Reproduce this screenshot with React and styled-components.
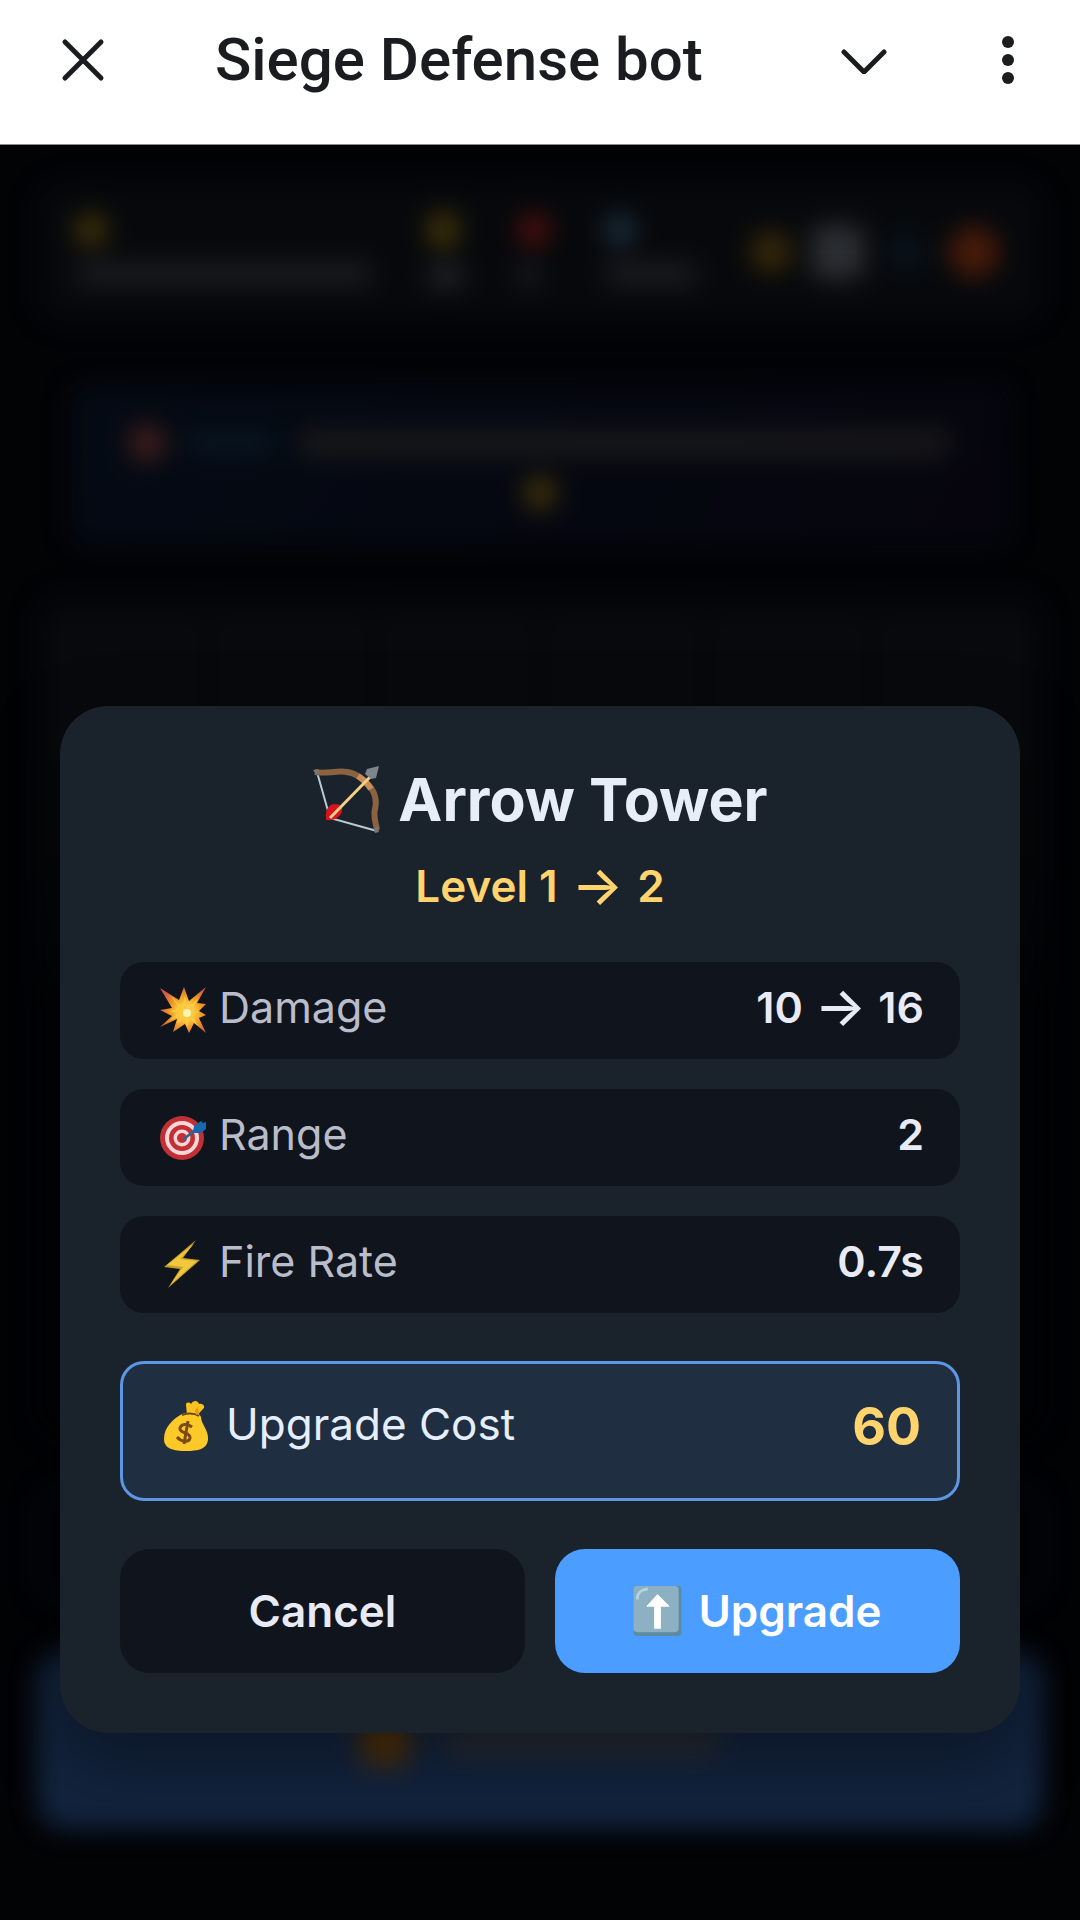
import React from "react";
import styled, { createGlobalStyle } from "styled-components";

const ui = '"Inter", "Noto Sans", sans-serif';

const GlobalStyle = createGlobalStyle`
  * { box-sizing: border-box; }
  body { margin: 0; background: #020305; font-family: ${ui}; }
  button { font-family: inherit; border: 0; padding: 0; cursor: pointer; }
  svg { display: block; flex: none; }
`;

const Page = styled.div`
  min-height: 100vh;
  display: flex;
  flex-direction: column;
  background: #020305;
`;

const TitleBar = styled.header`
  display: flex;
  align-items: flex-start;
  height: 145px;
  padding: 30px 41px 0 52px;
  background: #fff;
  color: #1b1c20;
  border-bottom: 1px solid #8a8b8c;
`;

const BarTitle = styled.h1`
  flex: 1;
  margin: 0 0 0 101px;
  font: 500 60px/60px "Roboto", sans-serif;
  color: #1b1c20;
  white-space: nowrap;
`;

const BarButton = styled.button`
  display: grid;
  place-items: center;
  width: 62px;
  height: 60px;
  margin-left: ${(p) => p.$gap || 0}px;
  background: none;
  color: inherit;
`;

const Stage = styled.main`
  flex: 1;
  display: grid;
  > * { grid-area: 1 / 1; min-width: 0; }
`;

const Game = styled.div`
  display: flex;
  flex-direction: column;
  gap: 50px;
  padding: 36px 36px 90px;
  overflow: hidden;
  filter: blur(12px);
`;

const Hud = styled.div`
  display: flex;
  align-items: center;
  justify-content: space-between;
  height: 142px;
  padding: 0 44px 0 38px;
  border-radius: 30px;
  background: #06080b;
`;

const Blob = styled.span`
  display: block;
  flex: none;
  width: ${(p) => p.$w || 34}px;
  height: ${(p) => p.$h || 34}px;
  border-radius: ${(p) => p.$r || 17}px;
  background: ${(p) => p.$c};
`;

const HudStat = styled.div`
  display: flex;
  flex-direction: column;
  gap: 14px;
  padding-bottom: 4px;
`;

const HudIcons = styled.div`
  display: flex;
  align-items: center;
  gap: 20px;
`;

const Notice = styled.div`
  display: flex;
  flex-direction: column;
  align-items: center;
  gap: 14px;
  height: 160px;
  margin: 12px 34px 0;
  padding: 36px 20px 0;
  border-radius: 18px;
  border: 3px solid #070a1b;
  background: linear-gradient(120deg, #040a14, #06050d);
`;

const NoticeLine = styled.div`
  display: flex;
  align-items: center;
  justify-content: center;
  gap: 20px;
`;

const Board = styled.div`
  flex: 1;
  display: grid;
  grid-template-columns: repeat(6, 1fr);
  grid-auto-rows: 150px;
  gap: 12px;
  padding: 20px 12px;
  border-radius: 30px;
  background: linear-gradient(#050709 0 30%, #020305 50%);
`;

const Tile = styled.span`
  border-radius: 18px;
  background: #07090c;
`;

const TowerBar = styled.div`
  height: 112px;
  border-radius: 24px;
  border: 6px solid #070b18;
`;

const StartWave = styled.div`
  display: flex;
  align-items: center;
  justify-content: center;
  gap: 30px;
  height: 180px;
  border-radius: 30px;
  background: #12233d;
`;

const Center = styled.div`
  position: relative;
  display: grid;
  align-content: end;
  padding: 0 60px 187px;
`;

const Dialog = styled.section`
  display: flex;
  flex-direction: column;
  padding: 60px;
  border-radius: 48px;
  background: #1a222c;
  box-shadow: 0 24px 72px rgba(0, 0, 0, 0.4);
`;

const Heading = styled.h2`
  display: flex;
  align-items: center;
  justify-content: center;
  gap: 18px;
  margin: 0;
  font-size: 59px;
  line-height: 68px;
  font-weight: 700;
  color: #e8eef8;
`;

const Level = styled.p`
  display: flex;
  align-items: center;
  justify-content: center;
  gap: 14px;
  margin: 24px 0 48px;
  font-size: 44px;
  line-height: 56px;
  font-weight: 600;
  color: #ffd36e;
`;

const Arrow = styled.span`
  font-size: 54px;
  line-height: 56px;
  font-weight: 500;
`;

const Stats = styled.dl`
  display: flex;
  flex-direction: column;
  gap: 30px;
  margin: 0;
`;

const Row = styled.div`
  display: flex;
  align-items: center;
  justify-content: space-between;
  height: 97px;
  padding: 0 36px 2px 39px;
  border-radius: 24px;
  background: #10141d;
`;

const CostRow = styled(Row)`
  height: 140px;
  margin: 18px 0 48px;
  padding-bottom: 8px;
  border: 3px solid #5d97e4;
  background: #1f2e41;
`;

const Name = styled.dt`
  display: flex;
  align-items: center;
  gap: ${(p) => (p.$cost ? 16 : 12)}px;
  font-size: ${(p) => (p.$cost ? 44 : 43)}px;
  line-height: 60px;
  color: ${(p) => (p.$cost ? "#e6eefc" : "#b9bdc9")};
`;

const Label = styled.span`
  padding-bottom: 6px;
`;

const Value = styled.dd`
  display: flex;
  align-items: center;
  gap: 12px;
  margin: 0;
  padding-bottom: ${(p) => (p.$cost ? 0 : 6)}px;
  font-size: ${(p) => (p.$cost ? 52 : 43)}px;
  line-height: 60px;
  font-weight: ${(p) => (p.$cost ? 700 : 600)};
  color: ${(p) => (p.$cost ? "#ffd36e" : "#e8ebf6")};
`;

const Actions = styled.div`
  display: grid;
  grid-template-columns: 1fr 1fr;
  gap: 30px;
`;

const Action = styled.button`
  display: flex;
  align-items: center;
  justify-content: center;
  gap: 16px;
  height: 124px;
  border-radius: 30px;
  font-size: 44px;
  line-height: 60px;
  font-weight: 600;
  color: ${(p) => (p.$primary ? "#fff" : "#e8ebf6")};
  background: ${(p) => (p.$primary ? "#4b9dff" : "#10141d")};
`;

const Bow = () => (
  <svg width="68" height="68" viewBox="0 0 68 68" fill="none" aria-hidden="true">
    <path d="M5 6 18 52 65 65" stroke="#b9cbd6" strokeWidth="2" />
    <path d="M14 52c-1-8 3-14 9-14 6 0 8 3 7 7-1 6-8 10-16 9Z" fill="#d7131d" />
    <path d="M3 6c13 3 29-5 43 4 14 9 20 20 17 33-2 8 1 14 2 21" stroke="#8b6341" strokeWidth="6" />
    <path d="M46 10c6 4 10 8 13 13" stroke="#c98e5b" strokeWidth="6" />
    <path d="M18 52 59 10" stroke="#f6cf86" strokeWidth="3" />
    <path d="m67 0-3 12-5 1-6-5 2-5Z" fill="#7c858b" />
    <path d="m1 4 5-1 2 4-4 2ZM62 62l4-1 1 5-4 1Z" fill="#79746f" />
  </svg>
);

const Burst = () => (
  <svg width="48" height="48" viewBox="0 0 48 48" aria-hidden="true">
    <defs>
      <radialGradient id="burst" cx="27" cy="26" r="27" gradientUnits="userSpaceOnUse">
        <stop offset="0" stopColor="#fff6a8" />
        <stop offset=".3" stopColor="#fbc94a" />
        <stop offset=".6" stopColor="#f19a20" />
        <stop offset="1" stopColor="#cf5a4a" />
      </radialGradient>
    </defs>
    <path fill="url(#burst)" d="M1 2 20 14 25 1l5 14L47 1 38 17l9 1-7 7 7 4-7 3 7 15-12-10-5 10-4-9-12 8 4-13L1 41l12-11L1 24l12-2Z" />
    <path fill="#fdc93f" d="m12 10 11 11 3-11 3 12 10-10-6 12 7 2-7 3 6 11-8-7-3 8-3-8-7 5 3-8-10 4 8-7-8-2 9-3Z" />
    <circle cx="28" cy="27" r="4" fill="#fff4b4" />
  </svg>
);

const Target = () => (
  <svg width="48" height="48" viewBox="0 0 48 48" aria-hidden="true">
    <circle cx="23" cy="25" r="22" fill="#c03034" />
    <circle cx="23" cy="25" r="17" fill="#fbd5d8" />
    <circle cx="23" cy="25" r="13" fill="#c03034" />
    <circle cx="23" cy="25" r="8.500" fill="#fbd5d8" />
    <circle cx="23" cy="25" r="5" fill="#c03034" />
    <path d="m24 27 14-12" stroke="#33658e" strokeWidth="2.500" />
    <path d="m35 13 7-5 2 2 3-1v7l-5 4-8 0Z" fill="#1769ad" />
  </svg>
);

const Bolt = () => (
  <svg width="48" height="48" viewBox="0 0 48 48" aria-hidden="true">
    <path fill="#c99f27" d="M37 0 5 27l16 2L9 48l32-28-17-2Z" />
    <path fill="#f0c83c" d="M35 4 8 25l16 2-12 17 26-23-17-2Z" />
  </svg>
);

const Money = () => (
  <svg width="48" height="52" viewBox="0 0 48 52" aria-hidden="true">
    <path fill="#fcc21f" d="m25 14-1-10c0-3 3-3 5-1 2-4 7-4 8 0 4-1 7 3 4 5-3 3-4 4-5 7Z" />
    <path fill="#fdc928" d="M20 13c8-3 17-2 19 3 0 7 8 13 7 23-1 9-10 11-22 11S2 48 2 38c0-12 9-20 18-25Z" />
    <path d="M20 14c6-2 12-2 17 1" stroke="#6b4710" strokeWidth="2" fill="none" />
    <path d="M30 26c-5-4-11-3-12 1-1 6 11 4 10 10-1 5-9 4-13-1M26 20l-4 23" stroke="#7b4c12" strokeWidth="3" fill="none" />
    <path fill="#e69b14" d="m33 9 3-3 1 6-3 2Z" />
  </svg>
);

const UpArrow = () => (
  <svg width="49" height="50" viewBox="0 0 50 52" aria-hidden="true">
    <rect width="50" height="52" rx="4" fill="#5c8ba3" />
    <rect width="47" height="48" rx="4" fill="#8db1c3" />
    <path d="M4 14C4 7 7 4 15 3" stroke="#b6d4e0" strokeWidth="3" fill="none" />
    <path d="M25 9 14 21h8v23h6V21h9Z" fill="#fff" stroke="#fff" strokeWidth="1" strokeLinejoin="round" />
  </svg>
);

const stats = [
  ["Damage", <><span>10</span><Arrow>→</Arrow><span>16</span></>, Burst],
  ["Range", "2", Target],
  ["Fire Rate", "0.7s", Bolt],
];

export default function App() {
  return (
    <>
      <GlobalStyle />
      <Page>
        <TitleBar>
          <BarButton aria-label="Close">
            <svg width="44" height="44" viewBox="0 0 44 44" fill="none" stroke="currentColor" strokeWidth="5" strokeLinecap="round">
              <path d="m4 4 36 36M40 4 4 40" />
            </svg>
          </BarButton>
          <BarTitle>Siege Defense bot</BarTitle>
          <BarButton aria-label="Collapse">
            <svg width="48" height="28" viewBox="0 0 48 28" fill="none" stroke="currentColor" strokeWidth="5" strokeLinecap="round" strokeLinejoin="round">
              <path d="m4 6 20 20L44 6" />
            </svg>
          </BarButton>
          <BarButton aria-label="More options" $gap={82}>
            <svg width="12" height="48" viewBox="0 0 12 48" fill="currentColor">
              <circle cx="6" cy="6" r="6" />
              <circle cx="6" cy="24" r="6" />
              <circle cx="6" cy="42" r="6" />
            </svg>
          </BarButton>
        </TitleBar>
        <Stage>
          <Game aria-hidden="true">
            <Hud>
              <HudStat><Blob $c="#3d3009" /><Blob $w={300} $h={26} $c="#191a1e" /></HudStat>
              <HudStat><Blob $c="#3d3009" $h={38} /><Blob $w={40} $h={26} $c="#1f2024" /></HudStat>
              <HudStat><Blob $c="#4a0f0d" /><Blob $w={24} $h={26} $c="#1b1c20" /></HudStat>
              <HudStat><Blob $c="#1a2b38" /><Blob $w={96} $h={26} $c="#191a1e" /></HudStat>
              <HudIcons>
                <Blob $w={42} $h={42} $c="#33250a" />
                <Blob $w={52} $h={54} $r={6} $c="#2b2e32" />
                <Blob $w={44} $h={40} $c="#091119" />
                <Blob $w={52} $h={52} $r={26} $c="#471a0a" />
              </HudIcons>
            </Hud>
            <Notice>
              <NoticeLine>
                <Blob $w={38} $h={38} $c="#3b1c1b" />
                <Blob $w={90} $h={26} $c="#071520" />
                <Blob $w={656} $h={30} $c="#171719" />
              </NoticeLine>
              <Blob $c="#3d3009" />
            </Notice>
            <Board>
              {Array.from({ length: 6 }, (_, i) => <Tile key={i} />)}
            </Board>
            <TowerBar />
            <StartWave>
              <Blob $w={52} $h={52} $c="#4c2e0a" />
              <Blob $w={280} $h={36} $c="#252a33" />
            </StartWave>
          </Game>
          <Center>
            <Dialog role="dialog" aria-modal="true" aria-labelledby="tower-name">
              <Heading id="tower-name"><Bow />Arrow Tower</Heading>
              <Level><span>Level 1</span><Arrow>→</Arrow><span>2</span></Level>
              <Stats>
                {stats.map(([name, value, Icon]) => (
                  <Row key={name}>
                    <Name><Icon /><Label>{name}</Label></Name>
                    <Value>{value}</Value>
                  </Row>
                ))}
                <CostRow>
                  <Name $cost><Money /><Label>Upgrade Cost</Label></Name>
                  <Value $cost>60</Value>
                </CostRow>
              </Stats>
              <Actions>
                <Action type="button">Cancel</Action>
                <Action type="button" $primary><UpArrow />Upgrade</Action>
              </Actions>
            </Dialog>
          </Center>
        </Stage>
      </Page>
    </>
  );
}
